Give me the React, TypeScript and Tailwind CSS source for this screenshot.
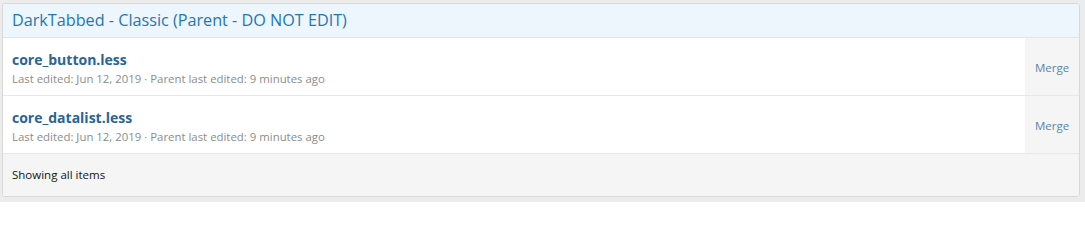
const ITEMS = [
  { name: "core_button.less", edited: "Jun 12, 2019", parent: "9 minutes ago" },
  { name: "core_datalist.less", edited: "Jun 12, 2019", parent: "9 minutes ago" },
];

export default function App() {
  return (
    <div className="min-h-[201px] bg-[#ececec] pt-[3px] pl-[2px] pr-[5px] pb-[5px] font-['Open_Sans',sans-serif]">
      <div className="rounded-[3px] border border-[#d8d8d8] bg-white overflow-hidden">
        <h2 className="h-[34px] flex items-center px-[9px] bg-[#edf6fd] border-b border-[#dfe6ee] text-[16.2px] text-[#2577b1] font-normal">
          DarkTabbed - Classic (Parent - DO NOT EDIT)
        </h2>
        {ITEMS.map((item) => (
          <div key={item.name} className="flex h-[58px] border-b border-[#e7e7e7]">
            <div className="flex-1 flex flex-col justify-center px-[9px] pt-[4px]">
              <a href="#" className="text-[14px] font-bold leading-[20px] text-[#2a6496]">
                {item.name}
              </a>
              <div className="text-[11.4px] leading-[17px] text-[#8c8c8c]">
                Last edited: {item.edited} · Parent last edited: {item.parent}
              </div>
            </div>
            <div className="w-[54px] bg-[#f5f5f5] flex items-center justify-center pt-[2px]">
              <a href="#" className="text-[11.5px] text-[#5a86ac]">Merge</a>
            </div>
          </div>
        ))}
        <div className="h-[42px] flex items-center px-[9px] bg-[#f5f5f5] text-[11.5px] text-[#141414]">
          Showing all items
        </div>
      </div>
    </div>
  );
}
